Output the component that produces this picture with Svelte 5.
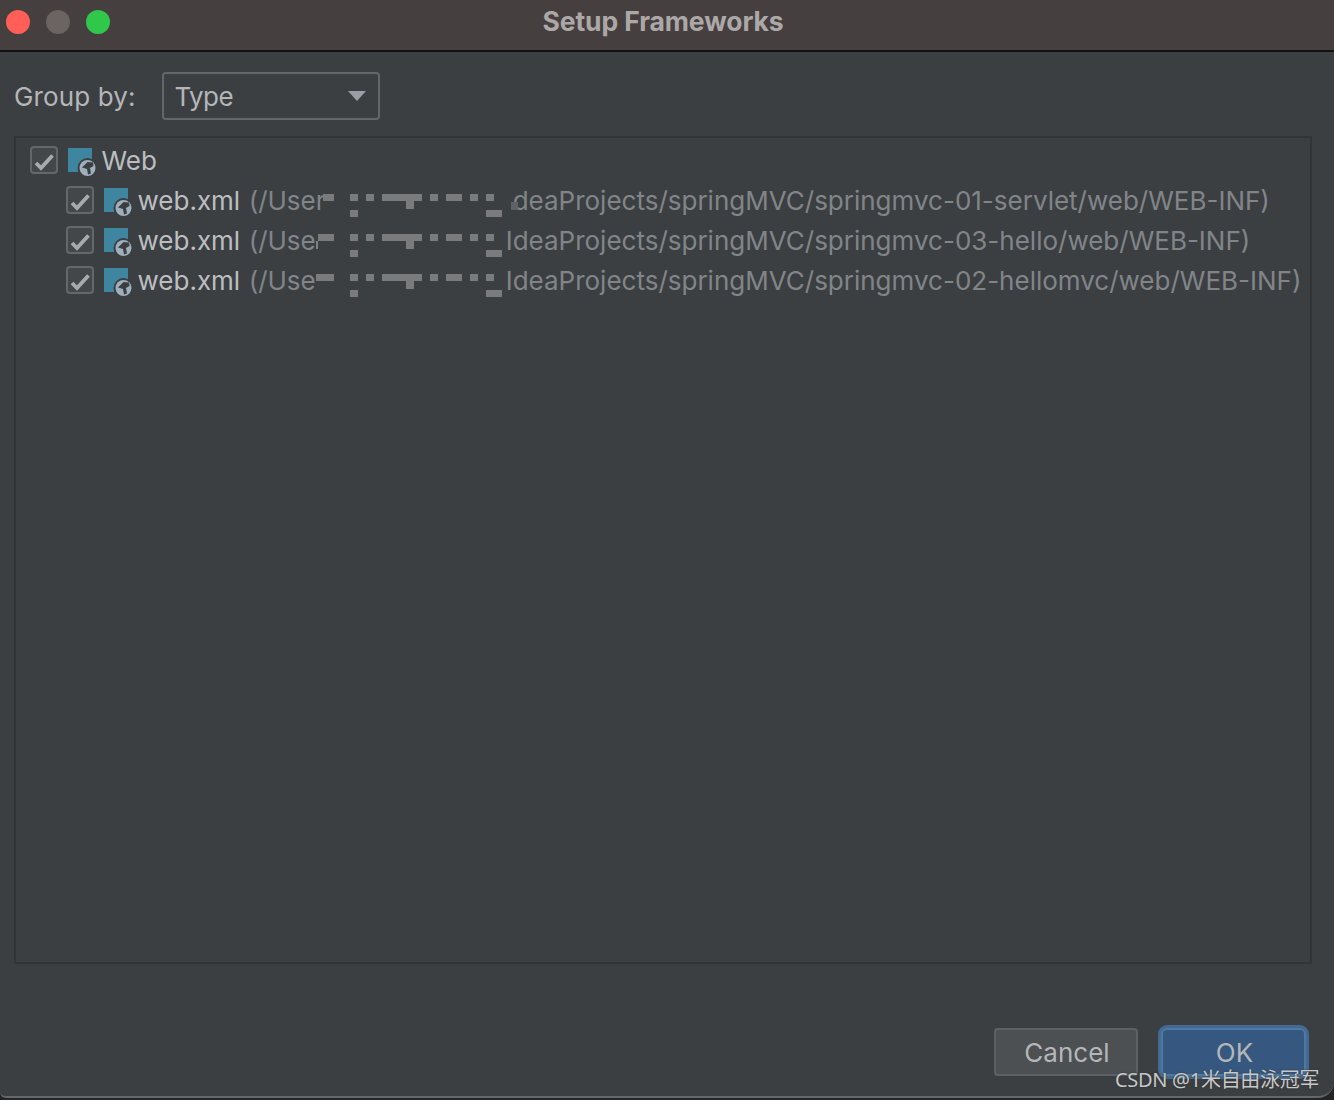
<script>
	const rows = [
		{ prefix: "(/User", clip: 74, suffix: "IdeaProjects/springMVC/springmvc-01-servlet/web/WEB-INF)", extra: [[257, 10, 7, 22, "bg"], [262, 22, 7, 8, "dim"]] },
		{ prefix: "(/Use", clip: 69, suffix: "IdeaProjects/springMVC/springmvc-03-hello/web/WEB-INF)", extra: [[67, 21, 2, 8, "text"]] },
		{ prefix: "(/Use", clip: 67, suffix: "IdeaProjects/springMVC/springmvc-02-hellomvc/web/WEB-INF)", extra: [] },
	];

	// blur blocks over the path: x, y, w, h
	const blocks = [
		[101, 14, 8, 7],
		[101, 30, 8, 7],
		[117, 14, 8, 7],
		[133, 14, 40, 7],
		[157, 21, 8, 8],
		[181, 14, 8, 7],
		[197, 14, 16, 7],
		[221, 14, 8, 7],
		[237, 14, 8, 7],
		[237, 30, 16, 7],
	];
</script>

{#snippet check()}
	<span class="check">
		<svg viewBox="0 0 28 28" width="28" height="28">
			<path d="M6 17l5 5L22.500 9.500" fill="none" stroke="#a8aaac" stroke-width="3.800" />
		</svg>
	</span>
{/snippet}

{#snippet webIcon()}
	<svg class="icon" viewBox="0 0 31 31" width="31" height="31">
		<rect x="1" y="1" width="24" height="24" fill="#3e86a0" />
		<circle cx="20.500" cy="21" r="10" fill="#3c3f41" />
		<circle cx="20.500" cy="21" r="8" fill="#9fafbc" />
		<path d="M15 20.500l5.500-5.500 5.500.5.500 3.500-3.500 2 1 5.500-3 1-1-5.500z" fill="#3c3f41" />
	</svg>
{/snippet}

<div class="window">
	<header class="titlebar">
		<div class="lights">
			<span class="light red"></span>
			<span class="light gray"></span>
			<span class="light green"></span>
		</div>
		<h1>Setup Frameworks</h1>
	</header>

	<div class="group">
		<span class="label">Group by:</span>
		<div class="select">
			<span class="value">Type</span>
			<svg viewBox="0 0 18 10" width="18" height="10"><path d="M0 0h18l-9 10z" fill="#9a9da1" /></svg>
		</div>
	</div>

	<div class="tree">
		<div class="row root">
			{@render check()}
			{@render webIcon()}
			<span class="name">Web</span>
		</div>
		{#each rows as row}
			<div class="row child">
				{@render check()}
				{@render webIcon()}
				<span class="name">web.xml</span>
				<div class="path">
					<span class="prefix" style="width: {row.clip}px">{row.prefix}</span>
					<span class="suffix" style="margin-left: {257 - row.clip}px">{row.suffix}</span>
					<i class="blur" style="left: {row.clip}px; top: 14px; width: {85 - row.clip}px; height: 7px"></i>
					{#each blocks as b}
						<i class="blur" style="left: {b[0]}px; top: {b[1]}px; width: {b[2]}px; height: {b[3]}px"></i>
					{/each}
					{#each row.extra as b}
						<i class="blur {b[4]}" style="left: {b[0]}px; top: {b[1]}px; width: {b[2]}px; height: {b[3]}px"></i>
					{/each}
				</div>
			</div>
		{/each}
	</div>

	<footer class="actions">
		<button class="btn">Cancel</button>
		<button class="btn primary">OK</button>
		<span class="watermark">CSDN @1米自由泳冠军</span>
	</footer>
</div>

<style>
	:global(body) {
		margin: 0;
		background: #232425;
	}
	.window {
		width: 1334px;
		height: 1098px;
		box-sizing: border-box;
		display: flex;
		flex-direction: column;
		background: #3b3f42;
		border-bottom: 2px solid #65686a;
		border-radius: 0 0 16px 6px;
		overflow: hidden;
		font-family: Inter, "Noto Sans", sans-serif;
		font-size: 26px;
		color: #b4b6b8;
	}
	.titlebar {
		position: relative;
		height: 52px;
		box-sizing: border-box;
		flex: none;
		display: flex;
		align-items: center;
		justify-content: center;
		padding-bottom: 9px;
		background: #463f3f;
		border-bottom: 2px solid #111;
	}
	h1 {
		margin: 0 0 0 -8px;
		font-size: 26.500px;
		font-weight: 700;
		color: #ada8a8;
		letter-spacing: -0.1px;
	}
	.lights {
		position: absolute;
		left: 6px;
		top: 10px;
		display: flex;
		gap: 16px;
	}
	.light {
		width: 24px;
		height: 24px;
		border-radius: 50%;
	}
	.red { background: #ff5f57; }
	.gray { background: #6b6462; }
	.green { background: #30c84b; }
	.group {
		display: flex;
		align-items: center;
		gap: 26px;
		padding: 20px 0 0 14px;
		height: 48px;
		flex: none;
	}
	.label {
		letter-spacing: 0.12px;
	}
	.select {
		width: 218px;
		height: 48px;
		box-sizing: border-box;
		display: flex;
		align-items: center;
		justify-content: space-between;
		padding: 0 12px 0 11px;
		border: 2px solid #646769;
		border-radius: 4px;
	}
	.value {
		letter-spacing: -0.6px;
	}
	.tree {
		flex: none;
		height: 828px;
		box-sizing: border-box;
		margin: 16px 22px 0 14px;
		padding: 2px 0 0 14px;
		border: 2px solid #323537;
	}
	.row {
		display: flex;
		align-items: center;
		height: 40px;
	}
	.child {
		padding-left: 36px;
	}
	.check {
		width: 28px;
		height: 28px;
		box-sizing: border-box;
		border: 2px solid #65686a;
		border-radius: 4px;
		background: #43474a;
		position: relative;
		display: block;
		flex: none;
	}
	.check svg {
		position: absolute;
		left: -2px;
		top: -2px;
	}
	.icon {
		margin-left: 9px;
		margin-top: 5px;
		flex: none;
	}
	.name {
		margin-left: 3.500px;
		color: #bcbec0;
	}
	.path {
		position: relative;
		display: flex;
		align-items: center;
		height: 40px;
		margin-left: 8.500px;
		color: #828588;
		white-space: nowrap;
	}
	.prefix {
		display: block;
	}
	.blur {
		position: absolute;
		background: #797b7d;
		filter: blur(0.5px);
	}
	.blur.bg {
		background: #3b3f42;
		filter: none;
	}
	.blur.dim {
		background: #5f6264;
	}
	.blur.text {
		background: #808386;
	}
	.actions {
		position: relative;
		flex: none;
		display: flex;
		justify-content: flex-end;
		gap: 23px;
		margin-top: 64px;
		padding-right: 28px;
	}
	.btn {
		font: inherit;
		color: #b4b6b8;
		width: 144px;
		height: 48px;
		padding: 0 0 0 2px;
		background: #4c5052;
		border: 2px solid #5e6163;
		border-radius: 4px;
	}
	.primary {
		width: 145px;
		background: #365880;
		border-color: #4f7aa0;
		box-shadow: 0 0 0 3px #436a94;
		border-radius: 6px;
	}
	.watermark {
		position: absolute;
		left: 1115px;
		top: 36px;
		font-size: 20px;
		font-family: "Noto Sans", "Noto Sans CJK SC", sans-serif;
		letter-spacing: -0.3px;
		color: #c6c8c9;
		text-shadow: 0 0 2px #333;
		white-space: nowrap;
	}
</style>
